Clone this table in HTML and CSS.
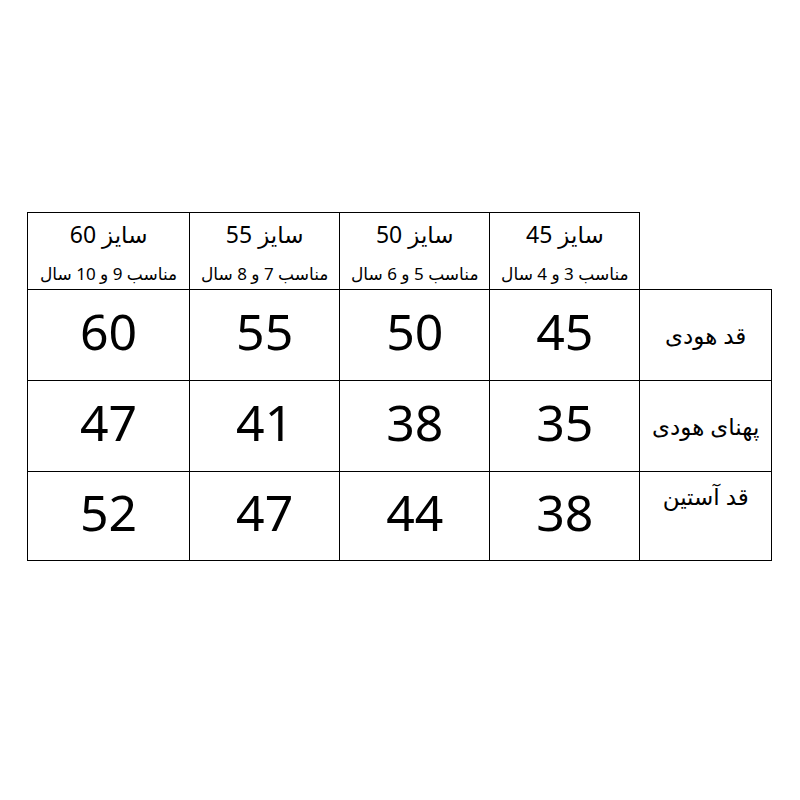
FILE: index.html
```html
<!DOCTYPE html>
<html lang="fa">
<head>
<meta charset="utf-8">
<link rel="stylesheet" href="styles.css">
</head>
<body>
<table class="size-table" dir="rtl">
  <tr class="head-row">
    <td class="blank"></td>
    <td class="head"><div class="size">سایز 45</div><div class="age">مناسب 3 و 4 سال</div></td>
    <td class="head"><div class="size">سایز 50</div><div class="age">مناسب 5 و 6 سال</div></td>
    <td class="head"><div class="size">سایز 55</div><div class="age">مناسب 7 و 8 سال</div></td>
    <td class="head"><div class="size">سایز 60</div><div class="age">مناسب 9 و 10 سال</div></td>
  </tr>
  <tr class="row r1">
    <td class="label">قد هودی</td>
    <td class="num">45</td><td class="num">50</td><td class="num">55</td><td class="num">60</td>
  </tr>
  <tr class="row r2">
    <td class="label">پهنای هودی</td>
    <td class="num">35</td><td class="num">38</td><td class="num">41</td><td class="num">47</td>
  </tr>
  <tr class="row r3">
    <td class="label top">قد آستین</td>
    <td class="num">38</td><td class="num">44</td><td class="num">47</td><td class="num">52</td>
  </tr>
</table>
</body>
</html>
```
FILE: styles.css
```css
html, body {
  margin: 0;
  padding: 0;
  background: #fff;
}
body {
  font-family: "Noto Sans", "DejaVu Sans", sans-serif;
  color: #000;
}
.size-table {
  border-collapse: collapse;
  margin: 212px 0 0 27px;
  table-layout: fixed;
  width: 745px;
}
.size-table td {
  border: 1px solid #000;
  padding: 0;
  text-align: center;
}
.size-table td.blank {
  border: none;
  border-bottom: 1px solid #000;
  width: 131px;
}
.head {
  width: 149px;
  height: 76px;
  vertical-align: top;
}
.head:last-child {
  width: 161px;
}
.size {
  font-size: 23px;
  line-height: 28px;
  margin-top: 7px;
}
.age {
  font-size: 17px;
  line-height: 22px;
  margin-top: 15px;
}
.row td {
  height: 90px;
}
.row.r3 td {
  height: 88px;
}
.row td.num {
  font-size: 50px;
  line-height: 60px;
  vertical-align: middle;
  height: 82px;
  padding-bottom: 8px;
}
.row.r3 td.num {
  height: 80px;
}
.label {
  font-size: 23px;
  line-height: 30px;
  vertical-align: middle;
}
.row.r3 td.label.top {
  vertical-align: top;
  height: 79px;
  padding-top: 9px;
}
```
